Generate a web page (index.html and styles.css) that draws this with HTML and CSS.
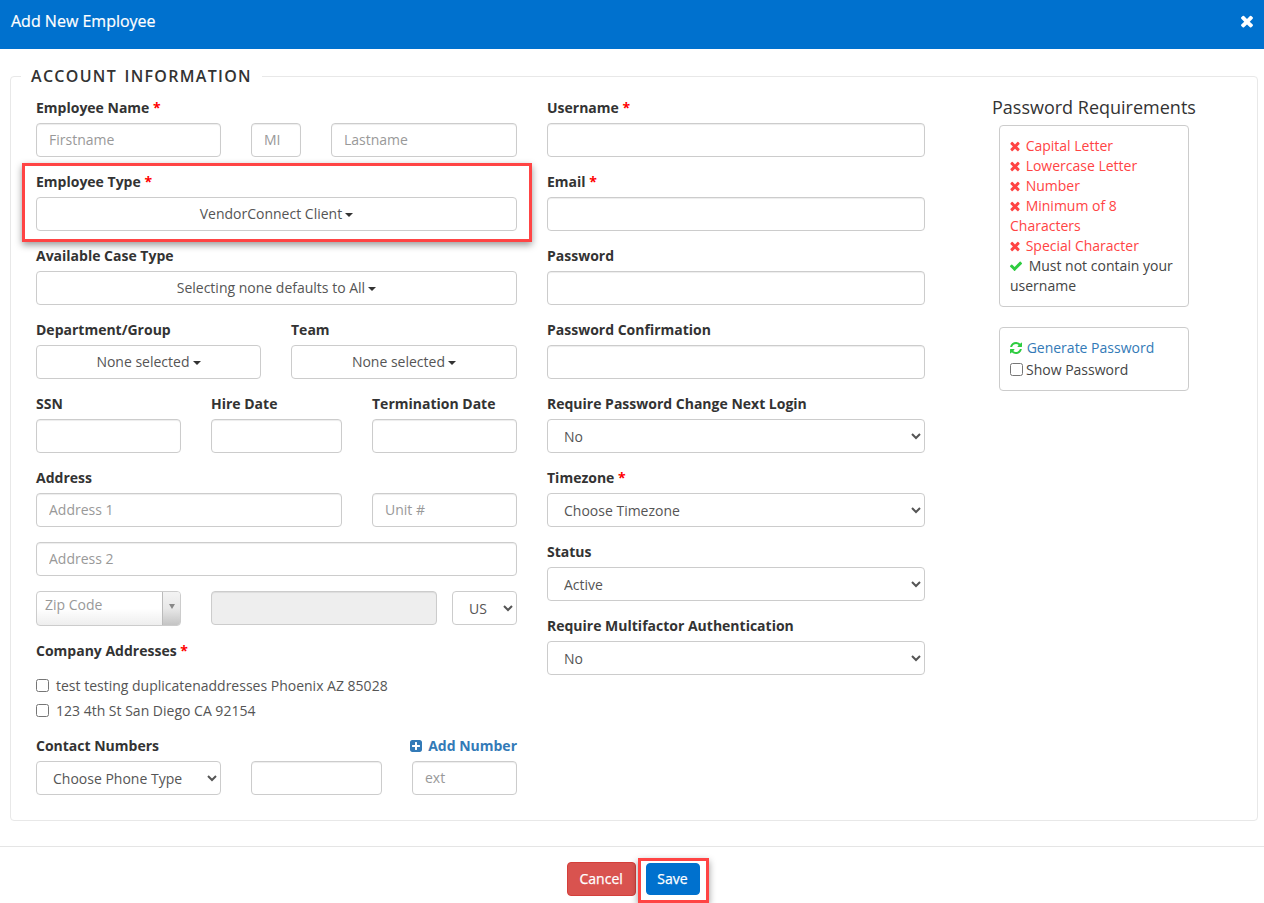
FILE: index.html
```html
<!DOCTYPE html>
<html lang="en">
<head>
<meta charset="utf-8">
<title>Add New Employee</title>
<link rel="stylesheet" href="styles.css">
</head>
<body>
<svg class="defs" aria-hidden="true">
  <symbol id="i-times" viewBox="0 0 1792 1792"><path d="M1490 1322q0 40-28 68l-136 136q-28 28-68 28t-68-28l-294-294-294 294q-28 28-68 28t-68-28l-136-136q-28-28-28-68t28-68l294-294-294-294q-28-28-28-68t28-68l136-136q28-28 68-28t68 28l294 294 294-294q28-28 68-28t68 28l136 136q28 28 28 68t-28 68l-294 294 294 294q28 28 28 68z"/></symbol>
  <symbol id="i-check" viewBox="0 0 1792 1792"><path d="M1671 566q0 40-28 68l-724 724-136 136q-28 28-68 28t-68-28l-136-136-362-362q-28-28-28-68t28-68l136-136q28-28 68-28t68 28l294 295 656-657q28-28 68-28t68 28l136 136q28 28 28 68z"/></symbol>
  <symbol id="i-refresh" viewBox="0 0 1792 1792"><path d="M1639 1056q0 5-1 7-64 268-268 434.5t-478 166.5q-146 0-282.5-55t-243.5-157l-129 129q-19 19-45 19t-45-19-19-45v-448q0-26 19-45t45-19h448q26 0 45 19t19 45-19 45l-137 137q71 66 161 102t187 36q134 0 250-65t186-179q11-17 53-117 8-23 30-23h192q13 0 22.5 9.5t9.5 22.5zm25-800v448q0 26-19 45t-45 19h-448q-26 0-45-19t-19-45 19-45l138-138q-148-137-349-137-134 0-250 65t-186 179q-11 17-53 117-8 23-30 23h-199q-13 0-22.5-9.5t-9.5-22.5v-7q65-268 270-434.5t480-166.5q146 0 284 55.5t245 156.5l130-129q19-19 45-19t45 19 19 45z"/></symbol>
  <symbol id="i-plus" viewBox="0 0 1792 1792"><path d="M1408 960v-128q0-26-19-45t-45-19h-320v-320q0-26-19-45t-45-19h-128q-26 0-45 19t-19 45v320h-320q-26 0-45 19t-19 45v128q0 26 19 45t45 19h320v320q0 26 19 45t45 19h128q26 0 45-19t19-45v-320h320q26 0 45-19t19-45zm256-544v960q0 119-84.5 203.5t-203.5 84.5h-960q-119 0-203.5-84.5t-84.5-203.5v-960q0-119 84.5-203.5t203.5-84.5h960q119 0 203.5 84.5t84.5 203.5z"/></symbol>
</svg>

<div class="modal">
  <header class="modal-header">
    <h4 class="modal-title">Add New Employee</h4>
    <svg class="close-icon"><use href="#i-times"/></svg>
  </header>

  <div class="modal-body">
    <fieldset class="panel">
      <legend class="panel-legend">ACCOUNT INFORMATION</legend>
      <div class="columns">

        <div class="col-left">
          <div class="group">
            <label class="lbl">Employee Name <span class="req">*</span></label>
            <div class="row row-name">
              <input class="ctl" placeholder="Firstname">
              <input class="ctl" placeholder="MI">
              <input class="ctl" placeholder="Lastname">
            </div>
          </div>
          <div class="group">
            <label class="lbl">Employee Type <span class="req">*</span></label>
            <button class="ctl ms" type="button">VendorConnect Client <span class="caret"></span></button>
          </div>
          <div class="group">
            <label class="lbl">Available Case Type</label>
            <button class="ctl ms" type="button">Selecting none defaults to All <span class="caret"></span></button>
          </div>
          <div class="row row-half">
            <div class="group">
              <label class="lbl">Department/Group</label>
              <button class="ctl ms" type="button">None selected <span class="caret"></span></button>
            </div>
            <div class="group">
              <label class="lbl">Team</label>
              <button class="ctl ms" type="button">None selected <span class="caret"></span></button>
            </div>
          </div>
          <div class="row row-ssn">
            <div class="group">
              <label class="lbl">SSN</label>
              <input class="ctl">
            </div>
            <div class="group">
              <label class="lbl">Hire Date</label>
              <input class="ctl">
            </div>
            <div class="group">
              <label class="lbl">Termination Date</label>
              <input class="ctl">
            </div>
          </div>
          <div class="group">
            <label class="lbl">Address</label>
            <div class="row row-addr">
              <input class="ctl" placeholder="Address 1">
              <input class="ctl" placeholder="Unit #">
            </div>
          </div>
          <div class="group">
            <input class="ctl" placeholder="Address 2">
          </div>
          <div class="row-zip">
            <div class="combo">
              <span class="combo-text">Zip Code</span>
              <span class="combo-btn"><span class="combo-arrow"></span></span>
            </div>
            <input class="ctl ctl-disabled" disabled>
            <select class="ctl sel sel-country"><option>US</option></select>
          </div>
          <div class="company">
            <label class="lbl">Company Addresses <span class="req">*</span></label>
            <label class="check-line first"><input type="checkbox" class="cb">test testing duplicatenaddresses Phoenix AZ 85028</label>
            <label class="check-line"><input type="checkbox" class="cb">123 4th St San Diego CA 92154</label>
          </div>
          <div class="contact-head">
            <label class="lbl">Contact Numbers</label>
            <a class="add-number"><svg class="ico ico-plus"><use href="#i-plus"/></svg> Add Number</a>
          </div>
          <div class="row row-phone">
            <select class="ctl sel"><option>Choose Phone Type</option></select>
            <input class="ctl">
            <input class="ctl" placeholder="ext">
          </div>
        </div>

        <div class="col-mid">
          <div class="group">
            <label class="lbl">Username <span class="req">*</span></label>
            <input class="ctl">
          </div>
          <div class="group">
            <label class="lbl">Email <span class="req">*</span></label>
            <input class="ctl">
          </div>
          <div class="group">
            <label class="lbl">Password</label>
            <input class="ctl">
          </div>
          <div class="group">
            <label class="lbl">Password Confirmation</label>
            <input class="ctl">
          </div>
          <div class="group">
            <label class="lbl">Require Password Change Next Login</label>
            <select class="ctl sel"><option>No</option></select>
          </div>
          <div class="group">
            <label class="lbl">Timezone <span class="req">*</span></label>
            <select class="ctl sel"><option>Choose Timezone</option></select>
          </div>
          <div class="group">
            <label class="lbl">Status</label>
            <select class="ctl sel"><option>Active</option></select>
          </div>
          <div class="group">
            <label class="lbl">Require Multifactor Authentication</label>
            <select class="ctl sel"><option>No</option></select>
          </div>
        </div>

        <aside class="col-right">
          <h4 class="req-title">Password Requirements</h4>
          <div class="req-box">
            <div class="bad"><svg class="ico ico-times"><use href="#i-times"/></svg> Capital Letter</div>
            <div class="bad"><svg class="ico ico-times"><use href="#i-times"/></svg> Lowercase Letter</div>
            <div class="bad"><svg class="ico ico-times"><use href="#i-times"/></svg> Number</div>
            <div class="bad"><svg class="ico ico-times"><use href="#i-times"/></svg> Minimum of 8 Characters</div>
            <div class="bad"><svg class="ico ico-times"><use href="#i-times"/></svg> Special Character</div>
            <div class="good"><svg class="ico ico-green ico-check"><use href="#i-check"/></svg> Must not contain your username</div>
          </div>
          <div class="req-box gen-box">
            <a class="gen-link"><svg class="ico ico-green ico-refresh"><use href="#i-refresh"/></svg> Generate Password</a>
            <label class="show-pass"><input type="checkbox" class="cb cb-show">Show Password</label>
          </div>
        </aside>
      </div>
    </fieldset>
  </div>

  <footer class="modal-footer">
    <button class="btn btn-cancel" type="button">Cancel</button>
    <button class="btn btn-save" type="button">Save</button>
  </footer>
</div>

<div class="mark mark-type"></div>
<div class="mark mark-save"></div>
</body>
</html>
```

FILE: styles.css
```css
* { box-sizing: border-box; }

html, body {
  margin: 0;
  height: 903px;
  overflow: hidden;
  background: #fff;
}

body {
  position: relative;
  font-family: "Open Sans", "Liberation Sans", sans-serif;
  font-size: 14px;
  line-height: 20px;
  color: #333;
}

.defs { position: absolute; width: 0; height: 0; }

.modal-header {
  height: 49px;
  background: #0071ce;
  color: #fff;
  display: flex;
  align-items: center;
  justify-content: space-between;
  padding: 0 8px 8px 11px;
}

.modal-title {
  margin: 0;
  font-size: 16px;
  font-weight: 400;
  line-height: 20px;
  -webkit-text-stroke: 0.2px #fff;
}

.close-icon { width: 18px; height: 18px; fill: #fff; }

.modal-body { padding: 17px 6px 0 10px; }

.panel {
  margin: 0;
  padding: 0 0 25px 25px;
  height: 755px;
  border: 1px solid #e8e8e8;
  border-radius: 4px;
  min-width: 0;
}

.panel-legend {
  margin-left: -15px;
  padding: 0 10px;
  font-size: 16px;
  font-weight: 600;
  letter-spacing: 1.3px;
  line-height: 20px;
  color: #333;
  word-spacing: 2px;
}

.columns { display: flex; align-items: flex-start; margin-top: 12px; }

.col-left { width: 481px; }
.col-mid { width: 378px; margin-left: 30px; }
.col-right { width: 210px; margin-left: 67px; margin-top: -4px; }

.group { margin-bottom: 15px; min-width: 0; }

.lbl {
  display: block;
  margin-bottom: 5px;
  font-weight: 700;
  line-height: 20px;
  color: #333;
}

.req { color: #f00; }

.row { display: grid; gap: 30px; }
.row-name { grid-template-columns: 185px 50px 186px; }
.row-half { grid-template-columns: 225px 226px; }
.row-ssn { grid-template-columns: 145px 131px 145px; }
.row-addr { grid-template-columns: 306px 145px; }
.row-phone { grid-template-columns: 185px 131px 105px; }

.ctl {
  display: block;
  width: 100%;
  height: 34px;
  padding: 5px 12px 7px;
  font: inherit;
  line-height: 20px;
  color: #555;
  background: #fff;
  border: 1px solid #ccc;
  border-radius: 4px;
  box-shadow: inset 0 1px 1px rgba(0, 0, 0, .075);
}

.ctl::placeholder { color: #999; opacity: 1; }

.ms { text-align: center; box-shadow: none; padding: 6px 12px; }

.caret {
  display: inline-block;
  width: 0;
  height: 0;
  margin-left: -0.5px;
  vertical-align: middle;
  border-top: 4px solid #333;
  border-left: 4px solid transparent;
  border-right: 4px solid transparent;
}

.sel { box-shadow: none; padding: 6px 12px; }

.row-zip {
  display: grid;
  grid-template-columns: 145px 226px 50px;
  column-gap: 30px;
  margin-bottom: 15px;
}

.row-zip .ctl-disabled { background: #eee; }
.sel-country { margin-left: -15px; width: 65px; }

.combo {
  position: relative;
  height: 35px;
  display: flex;
  border: 1px solid #ccc;
  border-radius: 4px;
  overflow: hidden;
  background: linear-gradient(to bottom, #fff 0%, #fff 50%, #eee 100%);
}

.combo-text {
  flex: 1;
  padding: 3px 8px;
  line-height: 20px;
  color: #999;
}

.combo-btn {
  width: 18px;
  display: flex;
  align-items: flex-start;
  justify-content: center;
  padding-top: 12px;
  border-left: 1px solid #bbb;
  background: linear-gradient(to bottom, #f3f3f3 0%, #e8e8e8 50%, #c4c4c4 100%);
}

.combo-arrow {
  width: 0;
  height: 0;
  border-top: 5px solid #888;
  border-left: 3px solid transparent;
  border-right: 3px solid transparent;
}

.company { margin-bottom: 13px; }
.company .lbl { margin-bottom: 0; }

.check-line {
  display: flex;
  align-items: center;
  height: 25px;
  color: #555;
}

.check-line.first { margin-top: 12px; }

.cb {
  width: 13px;
  height: 13px;
  margin: 0 7px 0 0;
  flex: none;
}

.contact-head {
  display: flex;
  justify-content: space-between;
}

.add-number { font-weight: 700; color: #337ab7; }

.ico {
  display: inline-block;
  width: 14px;
  height: 14px;
  fill: currentColor;
  vertical-align: -2px;
}

.ico-times { margin: 0 0 0 -2px; }
.ico-check { margin: 0 2px 0 -1px; }
.ico-refresh { margin: 0 0 0 -1px; }
.ico-plus { margin: 0 2px 0 0; }

.ico-green { color: #2ecc40; }

.req-title {
  margin: 0 0 5px;
  font-size: 18px;
  font-weight: 400;
  line-height: 26px;
  color: #333;
}

.req-box {
  width: 190px;
  margin-left: 7px;
  padding: 10px;
  border: 1px solid #ccc;
  border-radius: 4px;
}

.bad { color: #f44; }
.good { color: #444; }

.gen-box { margin-top: 20px; height: 64px; }
.gen-link { display: block; height: 22px; color: #337ab7; line-height: 20px; }

.show-pass { display: flex; align-items: center; height: 20px; color: #444; }
.cb-show { margin: -2px 3px 0 0; }

.modal-footer {
  margin-top: 25px;
  height: 57px;
  border-top: 1px solid #e5e5e5;
  display: flex;
  justify-content: center;
  gap: 10px;
  padding: 15px 0 0 2px;
}

.btn {
  height: 34px;
  padding: 0 12px;
  font: inherit;
  font-weight: 400;
  color: #fff;
  border-radius: 4px;
  -webkit-text-stroke: 0.25px #fff;
}

.btn-cancel { width: 69px; background: #d9534f; border: 1px solid #d43f3a; }
.btn-save { width: 54px; height: 32px; margin-top: 1px; background: #0071ce; border: 1px solid #0071ce; padding: 0; }

.mark {
  position: absolute;
  border: 3px solid #f44;
  box-shadow: 0 3px 7px rgba(0, 0, 0, .4);
  pointer-events: none;
}

.mark-type { left: 22px; top: 163px; width: 510px; height: 79px; }
.mark-save { left: 638px; top: 858px; width: 71px; height: 45px; }
```
